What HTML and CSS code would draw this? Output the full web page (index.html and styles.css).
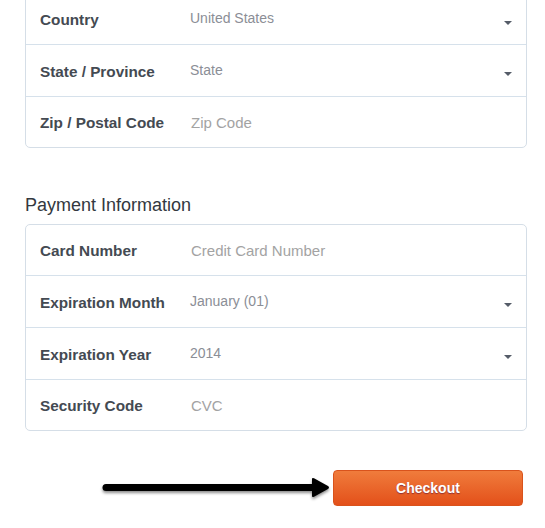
FILE: index.html
```html
<!DOCTYPE html>
<html>
<head>
<meta charset="utf-8">
<link rel="stylesheet" href="styles.css">
</head>
<body>
<div class="page">
  <div class="card card-top">
    <div class="row">
      <div class="label">Country</div>
      <div class="value select"><span>United States</span><span class="caret"></span></div>
    </div>
    <div class="row">
      <div class="label">State / Province</div>
      <div class="value select"><span>State</span><span class="caret"></span></div>
    </div>
    <div class="row">
      <div class="label">Zip / Postal Code</div>
      <div class="value placeholder">Zip Code</div>
    </div>
  </div>

  <h2 class="section-title">Payment Information</h2>

  <div class="card">
    <div class="row">
      <div class="label">Card Number</div>
      <div class="value placeholder">Credit Card Number</div>
    </div>
    <div class="row">
      <div class="label">Expiration Month</div>
      <div class="value select"><span>January (01)</span><span class="caret"></span></div>
    </div>
    <div class="row">
      <div class="label">Expiration Year</div>
      <div class="value select"><span>2014</span><span class="caret"></span></div>
    </div>
    <div class="row">
      <div class="label">Security Code</div>
      <div class="value placeholder">CVC</div>
    </div>
  </div>

  <div class="actions">
    <svg class="arrow" width="236" height="30" viewBox="0 0 236 30">
      <defs>
        <filter id="sh" x="-10%" y="-50%" width="120%" height="200%">
          <feDropShadow dx="0" dy="2" stdDeviation="1.6" flood-color="#000" flood-opacity="0.45"/>
        </filter>
      </defs>
      <g filter="url(#sh)">
        <line x1="8" y1="13.5" x2="220" y2="13.5" stroke="#000" stroke-width="7" stroke-linecap="round"/>
        <path d="M214 5 Q214 3.5 216 4.3 L230 12 Q232 13.5 230 15 L216 22.7 Q214 23.5 214 22 Z" fill="#000"/>
      </g>
    </svg>
    <button class="checkout">Checkout</button>
  </div>
</div>
</body>
</html>
```

FILE: styles.css
```css
html, body {
  margin: 0;
  padding: 0;
  background: #ffffff;
}

body {
  font-family: "Liberation Sans", Arial, Helvetica, sans-serif;
  color: #444a52;
}

.page {
  width: 502px;
  margin-left: 25px;
  margin-top: -7px;
}

.card {
  border: 1px solid #d5dee7;
  border-radius: 5px;
  background: #fff;
}

.row {
  display: flex;
  align-items: center;
  height: 51px;
  border-top: 1px solid #d6e1eb;
}

.row:first-child {
  border-top: none;
  height: 50px;
}

.row:last-child {
  height: 50px;
}

.label {
  width: 150px;
  padding-left: 14px;
  font-size: 15.3px;
  font-weight: bold;
  color: #444a52;
  flex: none;
  position: relative;
  top: 1px;
}

.value {
  flex: 1;
  display: flex;
  align-items: center;
}

.select {
  color: #8b8e96;
  font-size: 14px;
  padding-right: 14px;
}

.select span:first-child {
  flex: 1;
  position: relative;
  top: -1px;
}

.placeholder {
  color: #a3a3a3;
  font-size: 15px;
  padding-left: 1px;
}

.caret {
  width: 0;
  height: 0;
  border-left: 4px solid transparent;
  border-right: 4px solid transparent;
  border-top: 4px solid #555c68;
  margin-top: 7px;
}

.section-title {
  margin: 46px 0 0;
  height: 30px;
  font-size: 18px;
  font-weight: normal;
  color: #333840;
  line-height: 22px;
}

.actions {
  display: flex;
  justify-content: flex-end;
  align-items: center;
  margin-top: 39px;
  padding-right: 4px;
}

.arrow {
  display: block;
  margin-right: -1px;
  margin-top: 1px;
}

.checkout {
  width: 190px;
  height: 36px;
  border: 1px solid #d9531c;
  border-radius: 4px;
  background: linear-gradient(to bottom, #f07c3c 0%, #e3501a 100%);
  color: #ffffff;
  font-family: "Liberation Sans", Arial, sans-serif;
  font-size: 14px;
  font-weight: bold;
  text-shadow: 0 1px 1px rgba(90, 20, 60, 0.6);
  padding: 0;
}
```
